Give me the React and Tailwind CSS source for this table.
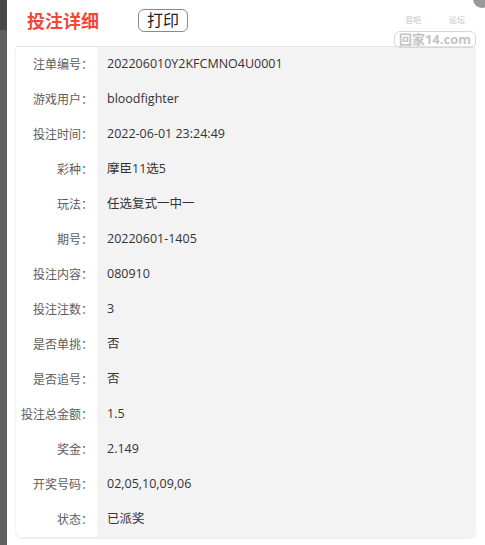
import React from "react";

const rows = [
  ["注单编号", "202206010Y2KFCMNO4U0001"],
  ["游戏用户", "bloodfighter"],
  ["投注时间", "2022-06-01 23:24:49"],
  ["彩种", "摩臣11选5"],
  ["玩法", "任选复式一中一"],
  ["期号", "20220601-1405"],
  ["投注内容", "080910"],
  ["投注注数", "3"],
  ["是否单挑", "否"],
  ["是否追号", "否"],
  ["投注总金额", "1.5"],
  ["奖金", "2.149"],
  ["开奖号码", "02,05,10,09,06"],
  ["状态", "已派奖"],
];

const App = () => {
  return (
    <div
      className="relative flex h-[545px] w-[485px] overflow-hidden bg-white"
      style={{ fontFamily: '"Open Sans", "Noto Sans CJK SC", sans-serif' }}
    >
      {/* dark strip on the left */}
      <div className="flex w-[7px] flex-none flex-col">
        <div className="h-[30px] bg-[#45484a]" />
        <div className="flex-1 bg-[#5d6063]" />
      </div>

      <div className="relative flex-1 pl-[9px] pr-[10px]">
        {/* header */}
        <div className="flex h-[47px] items-center border-b border-[#e8e8e8] pb-[5px]">
          <h2 className="ml-[11px] text-[18px] font-bold leading-none text-[#f2473a]">
            投注详细
          </h2>
          <button className="ml-[39px] rounded-md border border-[#8a8a8a] px-[8px] text-[16px] leading-[21px] text-[#222]">
            打印
          </button>
        </div>

        {/* watermark */}
        <div className="absolute right-[9px] top-[15px] flex flex-col items-center text-[#c4c4c4]">
          <div className="mb-[6px] flex w-[60px] justify-between text-[8px] leading-[10px]">
            <span>音吧</span>
            <span>论坛</span>
          </div>
          <div className="rounded-md border border-[#d6d6d6] px-[4px] text-[13px] font-bold leading-[15px]">
            回家14.com
          </div>
        </div>

        {/* detail table */}
        <div className="overflow-hidden rounded-b-md shadow-[0_1px_3px_rgba(0,0,0,0.12)]">
          {rows.map(([label, value]) => (
            <div key={label} className="flex h-[35px] text-[12.5px]">
              <div className="flex w-[81px] flex-none items-center justify-end whitespace-nowrap bg-white pr-[4px] text-[12px] text-[#5c5c5c]">
                {label}：
              </div>
              <div className="flex flex-1 items-center bg-[#f3f3f3] pl-[10px] text-[#333]">
                {value}
              </div>
            </div>
          ))}
        </div>
      </div>

      {/* close button corner */}
      <div className="absolute -right-[6px] -top-[10px] h-[18px] w-[18px] rounded-full bg-[#9a9a9a]" />
    </div>
  );
};

export default App;
